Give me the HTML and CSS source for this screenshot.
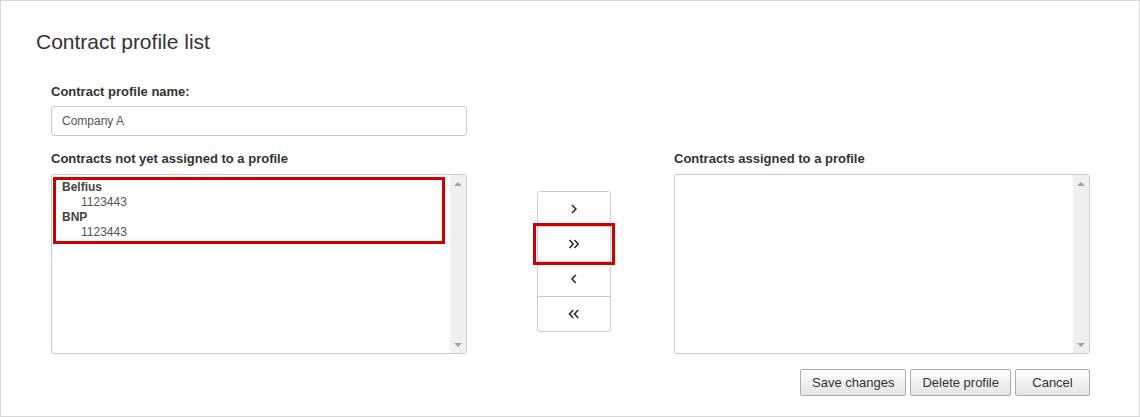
FILE: index.html
```html
<!DOCTYPE html>
<html lang="en">
<head>
    <meta charset="UTF-8">
    <meta name="viewport" content="width=device-width, initial-scale=1.0">
    <title>Contract profile list</title>
    <link rel="stylesheet" href="styles.css">
</head>
<body>
    <div class="page">
        <h1 class="title">Contract profile list</h1>
        <div class="form">
            <label class="field-label">Contract profile name:</label>
            <input class="text-input" type="text" value="Company A">

            <div class="lists">
                <div class="list-col">
                    <div class="field-label">Contracts not yet assigned to a profile</div>
                    <div class="listbox">
                        <div class="list-content">
                            <div class="highlight-list">
                                <div class="group-name">Belfius</div>
                                <div class="contract">1123443</div>
                                <div class="group-name">BNP</div>
                                <div class="contract">1123443</div>
                            </div>
                        </div>
                        <div class="scrollbar"><span class="arrow-up"></span><span class="arrow-down"></span></div>
                    </div>
                </div>

                <div class="move-col">
                    <div class="move-group">
                        <button class="move-btn" title="Move selected">
                            <svg width="12" height="10" viewBox="0 0 12 10"><polyline points="4,1 7.8,5 4,9" fill="none" stroke="#333" stroke-width="1.7"/></svg>
                        </button>
                        <button class="move-btn highlighted" title="Move all">
                            <svg width="14" height="10" viewBox="0 0 14 10"><polyline points="2.5,1 6.2,5 2.5,9" fill="none" stroke="#333" stroke-width="1.7"/><polyline points="7.5,1 11.2,5 7.5,9" fill="none" stroke="#333" stroke-width="1.7"/></svg>
                        </button>
                        <button class="move-btn" title="Remove selected">
                            <svg width="12" height="10" viewBox="0 0 12 10"><polyline points="7.8,1 4,5 7.8,9" fill="none" stroke="#333" stroke-width="1.7"/></svg>
                        </button>
                        <button class="move-btn" title="Remove all">
                            <svg width="14" height="10" viewBox="0 0 14 10"><polyline points="6.2,1 2.5,5 6.2,9" fill="none" stroke="#333" stroke-width="1.7"/><polyline points="11.2,1 7.5,5 11.2,9" fill="none" stroke="#333" stroke-width="1.7"/></svg>
                        </button>
                    </div>
                </div>

                <div class="list-col">
                    <div class="field-label">Contracts assigned to a profile</div>
                    <div class="listbox">
                        <div class="list-content"></div>
                        <div class="scrollbar"><span class="arrow-up"></span><span class="arrow-down"></span></div>
                    </div>
                </div>
            </div>

            <div class="actions">
                <button class="btn">Save changes</button>
                <button class="btn">Delete profile</button>
                <button class="btn">Cancel</button>
            </div>
        </div>
    </div>
</body>
</html>
```

FILE: styles.css
```css
* {
    box-sizing: border-box;
}
body {
    margin: 0;
    font-family: "Liberation Sans", Arial, sans-serif;
    color: #333;
    background: #fff;
}
.page {
    height: 417px;
    border: 1px solid #d9d9d9;
    padding: 29px 49px 0 35px;
}
.title {
    margin: 0;
    font-size: 21px;
    line-height: 24px;
    font-weight: normal;
    color: #333;
}
.form {
    margin-left: 15px;
    margin-top: 30px;
}
.field-label {
    display: block;
    font-size: 13px;
    line-height: 16px;
    font-weight: bold;
    color: #333;
    margin-bottom: 6px;
}
.text-input {
    display: block;
    width: 416px;
    height: 30px;
    border: 1px solid #ccc;
    border-radius: 3px;
    padding: 0 10px;
    font-family: "Liberation Sans", Arial, sans-serif;
    font-size: 12px;
    color: #555;
    outline: none;
}
.lists {
    display: grid;
    grid-template-columns: 416px 1fr 416px;
    margin-top: 15px;
}
.list-col .field-label {
    margin-bottom: 7px;
}
.listbox {
    display: flex;
    height: 180px;
    border: 1px solid #ccc;
    border-radius: 3px;
    overflow: hidden;
}
.list-content {
    flex: 1;
    padding: 2px 5px 0 1px;
}
.highlight-list {
    border: 3px solid #c00;
    padding: 0 6px 1px;
    font-size: 12px;
    line-height: 15px;
}
.group-name {
    font-weight: bold;
    color: #444;
}
.contract {
    padding-left: 19px;
    color: #555;
}
.scrollbar {
    width: 16px;
    background: #f0f0f0;
    display: flex;
    flex-direction: column;
    justify-content: space-between;
    align-items: center;
    padding: 7px 0 6px;
}
.arrow-up {
    width: 0;
    height: 0;
    border-left: 4px solid transparent;
    border-right: 4px solid transparent;
    border-bottom: 4px solid #a3a3a3;
}
.arrow-down {
    width: 0;
    height: 0;
    border-left: 4px solid transparent;
    border-right: 4px solid transparent;
    border-top: 4px solid #a3a3a3;
}
.move-col {
    padding: 40px 0 0 70px;
}
.move-group {
    width: 74px;
    border: 1px solid #ccc;
    border-radius: 3px;
    display: flex;
    flex-direction: column;
}
.move-btn {
    position: relative;
    height: 35px;
    border: none;
    border-top: 1px solid #ccc;
    background: #fff;
    display: flex;
    justify-content: center;
    align-items: center;
    padding: 0;
    cursor: pointer;
}
.move-btn:first-child {
    border-top: none;
    height: 34px;
    border-radius: 3px 3px 0 0;
}
.move-btn:last-child {
    border-radius: 0 0 3px 3px;
}
.move-btn.highlighted {
    z-index: 1;
}
.move-btn.highlighted::after {
    content: "";
    position: absolute;
    top: -4px;
    bottom: -4px;
    left: -5px;
    right: -5px;
    border: 3px solid #c00;
}
.actions {
    display: flex;
    justify-content: flex-end;
    gap: 4px;
    margin-top: 15px;
}
.btn {
    height: 27px;
    min-width: 75px;
    padding: 0 11px;
    font-family: "Liberation Sans", Arial, sans-serif;
    font-size: 13px;
    color: #333;
    border: 1px solid #adadad;
    border-radius: 2px;
    background: linear-gradient(#ffffff, #e4e4e4);
    cursor: pointer;
}
```
